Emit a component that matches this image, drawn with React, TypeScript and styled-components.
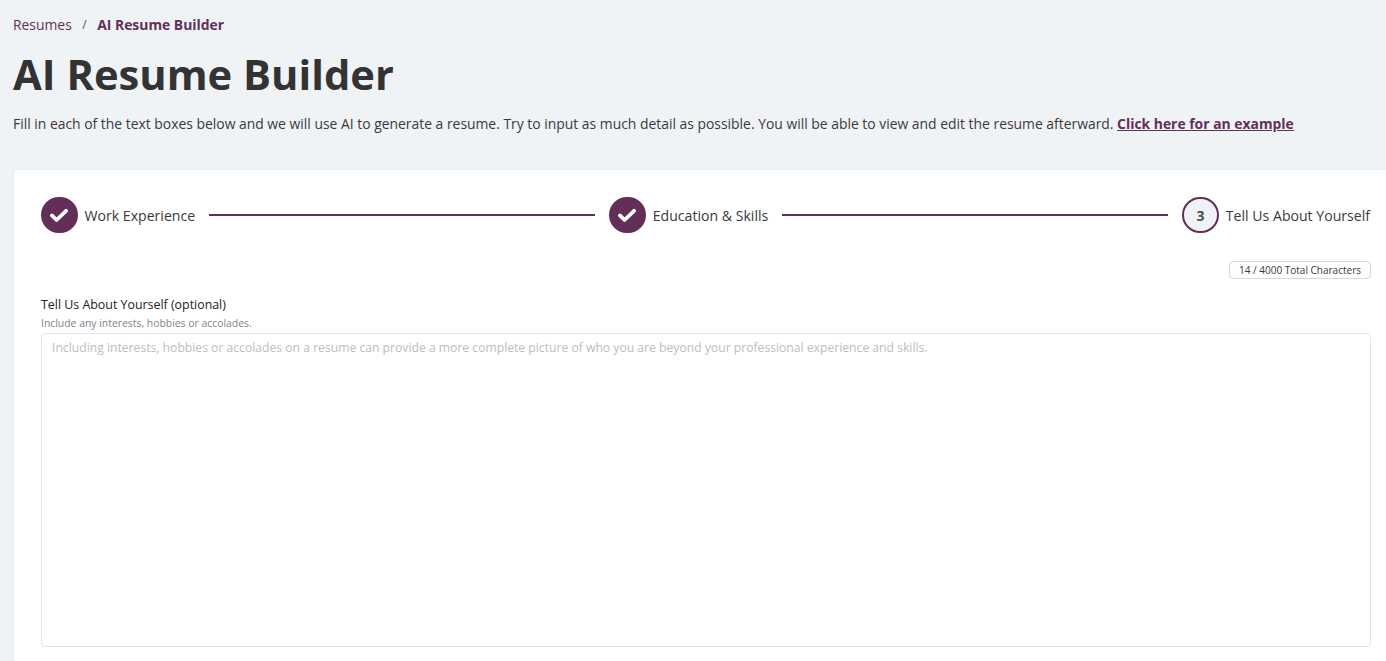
import React from "react";
import styled, { createGlobalStyle } from "styled-components";

const Global = createGlobalStyle`
  html, body { margin: 0; height: 100%; overflow: hidden; background: #f0f3f6; }
  body { font-family: "Open Sans", "Liberation Sans", sans-serif; color: #333; }
`;

const Page = styled.div`
  width: 1386px;
  height: 661px;
  overflow: hidden;
  padding: 15px 0 0 13px;
  box-sizing: border-box;
`;
const Crumbs = styled.nav`
  display: flex;
  align-items: center;
  height: 19px;
  font-size: 13.9px;
  color: #632f59;
`;
const Sep = styled.span`
  margin: 0 10.5px;
  font-size: 12px;
  color: #555;
`;
const Current = styled.strong`
  font-weight: 700;
`;
const Title = styled.h1`
  margin: 12px 0 0;
  font-size: 41.7px;
  line-height: 56px;
  font-weight: 700;
  color: #333;
`;
const Intro = styled.p`
  margin: 12px 0 0;
  font-size: 13.9px;
  line-height: 20px;
  color: #3a3a3a;
  white-space: nowrap;
`;
const ExampleLink = styled.a`
  font-weight: 700;
  color: #632f59;
  text-decoration: underline;
`;
const Card = styled.section`
  margin-top: 35px;
  width: 1400px;
  height: 520px;
  box-sizing: border-box;
  background: #fff;
  border: 1px solid #e8ebef;
  border-radius: 3px;
  padding: 26px 0 0 27px;
`;
const Inner = styled.div`
  width: 1330px;
`;
const Stepper = styled.div`
  display: flex;
  align-items: center;
  height: 38px;
  padding-right: 1px;
`;
const Step = styled.div`
  display: flex;
  align-items: center;
  gap: 7px;
  font-size: 14.1px;
  white-space: nowrap;
  color: #3a3a3a;
`;
const Circle = styled.span<{ $done?: boolean }>`
  width: 36.5px;
  height: 36.5px;
  box-sizing: border-box;
  border-radius: 50%;
  display: flex;
  align-items: center;
  justify-content: center;
  font-size: 14px;
  font-weight: 700;
  color: #4a5058;
  background: ${(p) => (p.$done ? "#632f59" : "#f0f3f6")};
  border: 2px solid #632f59;
`;
const Line = styled.span`
  flex: 1;
  height: 2px;
  margin: 0 14px;
  background: #632f59;
`;
const CounterRow = styled.div`
  display: flex;
  justify-content: flex-end;
  margin-top: 27px;
`;
const Counter = styled.span`
  height: 18px;
  box-sizing: border-box;
  padding: 0 9px;
  display: flex;
  align-items: center;
  font-size: 10px;
  color: #3a3a3a;
  background: #fff;
  border: 1px solid #d5d9de;
  border-radius: 4px;
`;
const Label = styled.label`
  display: block;
  margin-top: 17px;
  font-size: 12.4px;
  line-height: 17px;
  color: #222;
`;
const Hint = styled.div`
  margin-top: 3px;
  font-size: 10.4px;
  line-height: 14px;
  color: #7d848c;
`;
const Area = styled.textarea`
  display: block;
  width: 100%;
  height: 314px;
  margin-top: 3px;
  box-sizing: border-box;
  padding: 5px 10px;
  border: 1px solid #e2e4e8;
  border-radius: 4px;
  resize: none;
  outline: none;
  background: #fff;
  font-family: inherit;
  font-size: 12.17px;
  line-height: 17px;
  &::placeholder { color: #b9bec5; opacity: 1; }
`;

const Check = () => (
  <svg width="20" height="20" viewBox="0 0 24 24" fill="none" stroke="#fff" strokeWidth="4.5" strokeLinecap="round" strokeLinejoin="round">
    <path d="M3.5 12.5L9 18L20.5 7" />
  </svg>
);

export default function App() {
  return (
    <Page>
      <Global />
      <Crumbs>
        <span>Resumes</span>
        <Sep>/</Sep>
        <Current>AI Resume Builder</Current>
      </Crumbs>
      <Title>AI Resume Builder</Title>
      <Intro>
        Fill in each of the text boxes below and we will use AI to generate a resume. Try to input as much detail as possible. You will be able to view and edit the resume afterward.{" "}
        <ExampleLink href="#">Click here for an example</ExampleLink>
      </Intro>
      <Card>
        <Inner>
          <Stepper>
            <Step><Circle $done><Check /></Circle>Work Experience</Step>
            <Line />
            <Step><Circle $done><Check /></Circle>Education &amp; Skills</Step>
            <Line />
            <Step><Circle>3</Circle>Tell Us About Yourself</Step>
          </Stepper>
          <CounterRow><Counter>14 / 4000 Total Characters</Counter></CounterRow>
          <Label>Tell Us About Yourself (optional)</Label>
          <Hint>Include any interests, hobbies or accolades.</Hint>
          <Area placeholder="Including interests, hobbies or accolades on a resume can provide a more complete picture of who you are beyond your professional experience and skills." />
        </Inner>
      </Card>
    </Page>
  );
}
